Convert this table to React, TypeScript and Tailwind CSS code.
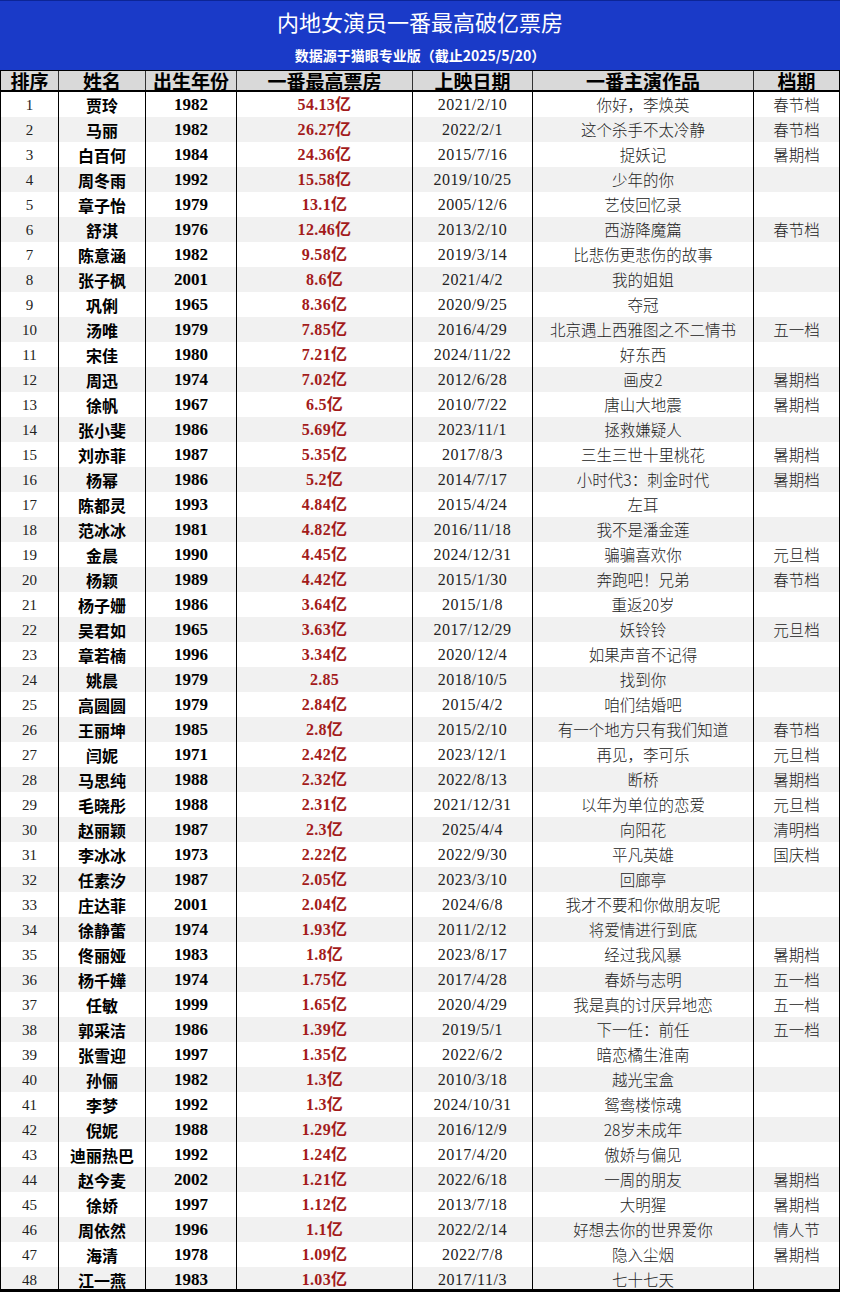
import React from "react";

type Row = [string, string, string, string, string, string];

// 姓名, 出生年份, 票房, 上映日期, 作品, 档期
const rows: Row[] = [
  ["贾玲", "1982", "54.13亿", "2021/2/10", "你好，李焕英", "春节档"],
  ["马丽", "1982", "26.27亿", "2022/2/1", "这个杀手不太冷静", "春节档"],
  ["白百何", "1984", "24.36亿", "2015/7/16", "捉妖记", "暑期档"],
  ["周冬雨", "1992", "15.58亿", "2019/10/25", "少年的你", ""],
  ["章子怡", "1979", "13.1亿", "2005/12/6", "艺伎回忆录", ""],
  ["舒淇", "1976", "12.46亿", "2013/2/10", "西游降魔篇", "春节档"],
  ["陈意涵", "1982", "9.58亿", "2019/3/14", "比悲伤更悲伤的故事", ""],
  ["张子枫", "2001", "8.6亿", "2021/4/2", "我的姐姐", ""],
  ["巩俐", "1965", "8.36亿", "2020/9/25", "夺冠", ""],
  ["汤唯", "1979", "7.85亿", "2016/4/29", "北京遇上西雅图之不二情书", "五一档"],
  ["宋佳", "1980", "7.21亿", "2024/11/22", "好东西", ""],
  ["周迅", "1974", "7.02亿", "2012/6/28", "画皮2", "暑期档"],
  ["徐帆", "1967", "6.5亿", "2010/7/22", "唐山大地震", "暑期档"],
  ["张小斐", "1986", "5.69亿", "2023/11/1", "拯救嫌疑人", ""],
  ["刘亦菲", "1987", "5.35亿", "2017/8/3", "三生三世十里桃花", "暑期档"],
  ["杨幂", "1986", "5.2亿", "2014/7/17", "小时代3：刺金时代", "暑期档"],
  ["陈都灵", "1993", "4.84亿", "2015/4/24", "左耳", ""],
  ["范冰冰", "1981", "4.82亿", "2016/11/18", "我不是潘金莲", ""],
  ["金晨", "1990", "4.45亿", "2024/12/31", "骗骗喜欢你", "元旦档"],
  ["杨颖", "1989", "4.42亿", "2015/1/30", "奔跑吧！兄弟", "春节档"],
  ["杨子姗", "1986", "3.64亿", "2015/1/8", "重返20岁", ""],
  ["吴君如", "1965", "3.63亿", "2017/12/29", "妖铃铃", "元旦档"],
  ["章若楠", "1996", "3.34亿", "2020/12/4", "如果声音不记得", ""],
  ["姚晨", "1979", "2.85", "2018/10/5", "找到你", ""],
  ["高圆圆", "1979", "2.84亿", "2015/4/2", "咱们结婚吧", ""],
  ["王丽坤", "1985", "2.8亿", "2015/2/10", "有一个地方只有我们知道", "春节档"],
  ["闫妮", "1971", "2.42亿", "2023/12/1", "再见，李可乐", "元旦档"],
  ["马思纯", "1988", "2.32亿", "2022/8/13", "断桥", "暑期档"],
  ["毛晓彤", "1988", "2.31亿", "2021/12/31", "以年为单位的恋爱", "元旦档"],
  ["赵丽颖", "1987", "2.3亿", "2025/4/4", "向阳花", "清明档"],
  ["李冰冰", "1973", "2.22亿", "2022/9/30", "平凡英雄", "国庆档"],
  ["任素汐", "1987", "2.05亿", "2023/3/10", "回廊亭", ""],
  ["庄达菲", "2001", "2.04亿", "2024/6/8", "我才不要和你做朋友呢", ""],
  ["徐静蕾", "1974", "1.93亿", "2011/2/12", "将爱情进行到底", ""],
  ["佟丽娅", "1983", "1.8亿", "2023/8/17", "经过我风暴", "暑期档"],
  ["杨千嬅", "1974", "1.75亿", "2017/4/28", "春娇与志明", "五一档"],
  ["任敏", "1999", "1.65亿", "2020/4/29", "我是真的讨厌异地恋", "五一档"],
  ["郭采洁", "1986", "1.39亿", "2019/5/1", "下一任：前任", "五一档"],
  ["张雪迎", "1997", "1.35亿", "2022/6/2", "暗恋橘生淮南", ""],
  ["孙俪", "1982", "1.3亿", "2010/3/18", "越光宝盒", ""],
  ["李梦", "1992", "1.3亿", "2024/10/31", "鸳鸯楼惊魂", ""],
  ["倪妮", "1988", "1.29亿", "2016/12/9", "28岁未成年", ""],
  ["迪丽热巴", "1992", "1.24亿", "2017/4/20", "傲娇与偏见", ""],
  ["赵今麦", "2002", "1.21亿", "2022/6/18", "一周的朋友", "暑期档"],
  ["徐娇", "1997", "1.12亿", "2013/7/18", "大明猩", "暑期档"],
  ["周依然", "1996", "1.1亿", "2022/2/14", "好想去你的世界爱你", "情人节"],
  ["海清", "1978", "1.09亿", "2022/7/8", "隐入尘烟", "暑期档"],
  ["江一燕", "1983", "1.03亿", "2017/11/3", "七十七天", ""],
];

const headers = ["排序", "姓名", "出生年份", "一番最高票房", "上映日期", "一番主演作品", "档期"];

const cjk = "font-['Noto_Sans_CJK_SC',sans-serif]";
const num = "font-['Liberation_Serif','Noto_Sans_CJK_SC',serif]";
const grid = "grid grid-cols-[58px_87px_91px_176px_120px_221px_1fr]";

export default function App() {
  return (
    <div className={`w-[842px] bg-white ${cjk}`}>
      {/* Title */}
      <div className="h-[70px] w-[840px] bg-[#1a3ac8] border-t border-[#0c2596] flex flex-col items-center text-white">
        <div className="mt-[5px] text-[22px] leading-[30px]">内地女演员一番最高破亿票房</div>
        <div className="mt-[10px] text-[14px] leading-[18px] font-bold">数据源于猫眼专业版（截止2025/5/20）</div>
      </div>

      {/* Header */}
      <div className={`${grid} w-[840px] h-[22px] bg-[#d9d9d9] border-t border-b-2 border-black border-x`}>
        {headers.map((h, i) => (
          <div
            key={h}
            className={`flex items-center justify-center text-[19px] leading-none font-bold text-black ${i < 6 ? "border-r border-[#333]" : ""}`}
          >
            {h}
          </div>
        ))}
      </div>

      {/* Body */}
      {rows.map((r, idx) => {
        const last = idx === rows.length - 1;
        return (
          <div
            key={idx}
            className={`${grid} w-[840px] h-[25px] border-x border-black ${idx % 2 === 1 ? "bg-[#f1f1f1]" : "bg-white"} ${last ? "border-b-[3px]" : ""}`}
          >
            <div className={`flex items-center justify-center border-r border-black text-[15px] text-[#222] ${num}`}>{idx + 1}</div>
            <div className="flex items-center justify-center border-r border-black text-[16px] font-bold text-black">{r[0]}</div>
            <div className={`flex items-center justify-center border-r border-black text-[17px] font-bold text-black ${num}`}>{r[1]}</div>
            <div className={`flex items-center justify-center border-r border-black text-[16px] font-bold text-[#a31b1b] tracking-[0.3px] ${num}`}>{r[2]}</div>
            <div className={`flex items-center justify-center border-r border-black text-[16px] text-[#222] tracking-[0.5px] ${num}`}>{r[3]}</div>
            <div className="flex items-center justify-center border-r border-black text-[15.5px] font-light text-[#222] whitespace-nowrap">{r[4]}</div>
            <div className="flex items-center justify-center text-[15.5px] font-light text-[#222]">{r[5]}</div>
          </div>
        );
      })}
    </div>
  );
}
